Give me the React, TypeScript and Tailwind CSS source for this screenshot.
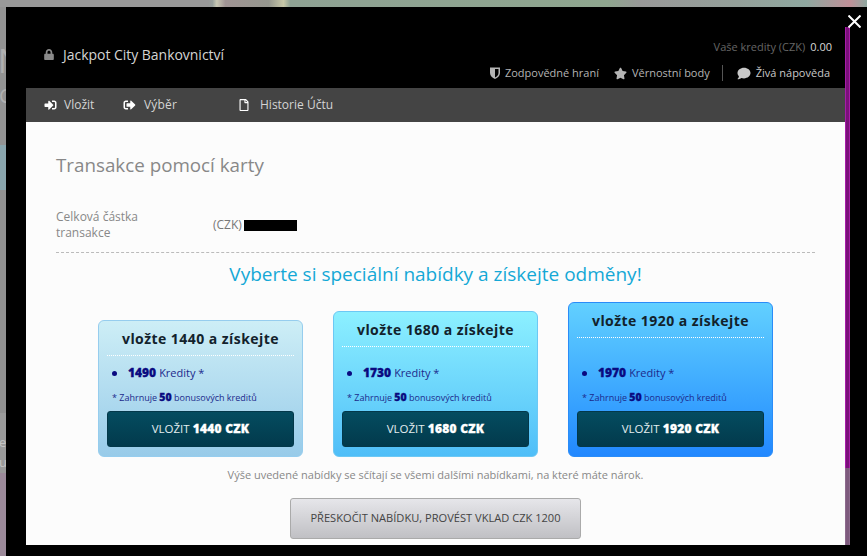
import { FaLock, FaSignInAlt, FaSignOutAlt, FaRegFile, FaStar, FaComment } from "react-icons/fa";

type Offer = { price: string; credits: string; card: string; h: string };

const offers: Offer[] = [
  { price: "1440", credits: "1490", h: "h-[137px]", card: "border-[#96cdee] bg-gradient-to-b from-[#cdeef6] to-[#98cbe9]" },
  { price: "1680", credits: "1730", h: "h-[146px]", card: "border-[#6cc8f4] bg-gradient-to-b from-[#8cf0ff] to-[#4fbef8]" },
  { price: "1920", credits: "1970", h: "h-[155px]", card: "border-[#2a8cf8] bg-gradient-to-b from-[#62d0ff] to-[#2288ff]" },
];

function OfferCard({ o }: { o: Offer }) {
  return (
    <div className={`flex w-[205px] flex-col justify-between rounded-[6px] border px-2 pb-[9px] ${o.h} ${o.card}`}>
      <div>
        <div className="flex h-[35px] items-center justify-center border-b border-dotted border-white text-[14px] font-bold tracking-[0.45px] text-[#12222c]">
          vložte {o.price} a získejte
        </div>
      </div>
      <div>
        <div className="flex h-[20px] items-center pl-[5px] text-[11px] text-[#1c2a8c]">
          <span className="h-[5px] w-[5px] rounded-full bg-[#0a0a80]" />
          <span className="ml-[11px] text-[12px] font-extrabold text-[#0a0a80] [-webkit-text-stroke:0.3px_#0a0a80]">{o.credits}</span>
          <span className="ml-[3px]">Kredity *</span>
        </div>
        <div className="mt-[6px] flex h-[18px] items-center pl-[5px] text-[9px] text-[#1c2a8c]">
          <span>* Zahrnuje <b className="text-[10.5px] font-extrabold text-[#0a0a80] [-webkit-text-stroke:0.3px_#0a0a80]">50</b> bonusových kreditů</span>
        </div>
        <button className="mt-[4px] flex h-[36px] w-full items-center justify-center rounded-[3px] border border-[#03384a] bg-gradient-to-b from-[#044c60] to-[#023a4c] text-[11.5px] text-[#e4eef0]">
          VLOŽIT&nbsp;<b className="text-[12px] font-extrabold tracking-[0.25px] text-white [-webkit-text-stroke:0.3px_#ffffff]">{o.price} CZK</b>
        </button>
      </div>
    </div>
  );
}

export default function App() {
  return (
    <div className="flex h-[556px] w-[867px] flex-col overflow-hidden bg-[#979797] font-['Open_Sans',sans-serif]">
      <div className="h-[7px] bg-[linear-gradient(90deg,#999_0,#999_24%,#97a09c_24.5%,#c8c8b4_25%,#a09494_26%,#96988f_31%,#c8c8a8_32.7%,#8fa294_33.5%,#8fa68f_70%,#999_74%,#94a09a_85%,#8fa8a0_93%,#c09098_98%,#8fa8a0_100%)]" />
      <div className="flex min-h-0 flex-1">
        <div className="flex w-[6px] flex-col overflow-hidden text-[#b0b0b0]">
          <div className="h-[138px] bg-[#939393] pt-[37px] text-[32px] leading-[34px]"><div className="w-[30px] -translate-x-[2px]">N</div><div className="w-[30px] -translate-x-[1px] text-[20px] leading-[36px]">C</div></div>
          <div className="h-[45px] bg-[#8aa6ae]" />
          <div className="h-[223px] bg-[#909090]" />
          <div className="h-[60px] bg-[#9a9a9a] pt-[19px] text-[13px] leading-[20px] text-[#c4c4c4]"><div className="w-[30px] -translate-x-[1px]">e</div><div className="w-[30px] -translate-x-[1px]">ur</div></div>
          <div className="flex-1 bg-[#9c8a9a]" />
        </div>
        <div className="relative flex min-w-0 flex-1 flex-col bg-black pl-[20px] pb-[11px]">
          <svg className="absolute right-[6px] top-[8px] h-[13px] w-[13px]" viewBox="0 0 13 13" stroke="white" strokeWidth="2">
            <path d="M0.5 0.5 12.5 12.5M12.5 0.5 0.5 12.5" />
          </svg>
          <div className="flex h-[81px] w-[819px] justify-between pl-[18px] pr-[13px]">
            <div className="flex items-center gap-[9px] pt-[14px] text-[14px] text-[#d4d4d4]">
              <FaLock className="h-[11px] w-[10px] text-[#8a8a8a]" />
              <span className="tracking-[-0.03px]">Jackpot City Bankovnictví</span>
            </div>
            <div className="flex flex-col items-end pt-[31px]">
              <div className="flex h-[18px] items-center text-[11px] text-[#666]">
                Vaše kredity (CZK)<span className="ml-[5px] text-[#d8d8d8]">0.00</span>
              </div>
              <div className="mt-[7px] flex h-[20px] items-center pr-[2px] text-[11px] text-[#b4b4b4]">
                <svg className="h-[12px] w-[10px]" viewBox="0 0 10 12" fill="#b4b4b4" fillRule="evenodd">
                  <path d="M0 .5h10v5.5c0 3-2.5 4.9-5 6-2.5-1.1-5-3-5-6zM5 2v8.5c1.8-.9 3.5-2.3 3.5-4.5V2z" />
                </svg>
                <span className="ml-[5px]">Zodpovědné hraní</span>
                <FaStar className="ml-[15px] h-[13px] w-[13px] text-[#b4b4b4]" />
                <span className="ml-[5px]">Věrnostní body</span>
                <span className="ml-[12px] h-[16px] w-px bg-[#555]" />
                <FaComment className="ml-[14px] h-[13px] w-[14px] text-[#c8c8c8]" />
                <span className="ml-[5px] text-[#c8c8c8]">Živá nápověda</span>
              </div>
            </div>
          </div>
          <div className="flex min-h-0 flex-1">
            <div className="flex w-[819px] flex-col">
              <nav className="flex h-[34px] items-center bg-[#444] pl-[18px] text-[12px] text-[#d4d4d4]">
                <FaSignInAlt className="h-[12px] w-[13px] text-white" />
                <span className="ml-[7px] w-[29px]">Vložit</span>
                <FaSignOutAlt className="ml-[30px] h-[12px] w-[13px] text-white" />
                <span className="ml-[8px] w-[33px] tracking-[0.2px]">Výběr</span>
                <FaRegFile className="ml-[62px] h-[12px] w-[10px] text-white" />
                <span className="ml-[11px]">Historie Účtu</span>
              </nav>
              <main className="flex min-h-0 flex-1 flex-col bg-[#fcfcfc] pt-[31px]">
                <h1 className="px-[30px] text-[18.8px] leading-[25px] text-[#888]">Transakce pomocí karty</h1>
                <div className="mx-[30px] mt-[31px] flex h-[44px] items-start border-b border-dashed border-[#bbb] text-[12px] leading-[16px] text-[#888]">
                  <div className="w-[157px]">Celková částka<br />transakce</div>
                  <div className="flex h-[32px] items-center text-[#777]">
                    (CZK)<span className="ml-[2px] h-[11px] w-[53px] bg-black" />
                  </div>
                </div>
                <h2 className="mt-[8px] text-center text-[19px] leading-[26px] text-[#14a8d6]">
                  Vyberte si speciální nabídky a získejte odměny!
                </h2>
                <div className="mt-[15px] flex h-[155px] items-end justify-center gap-[30px]">
                  {offers.map((o) => <OfferCard key={o.price} o={o} />)}
                </div>
                <p className="mt-[10px] text-center text-[11px] leading-[16px] text-[#888]">
                  Výše uvedené nabídky se sčítají se všemi dalšími nabídkami, na které máte nárok.
                </p>
                <div className="mt-[15px] flex justify-center">
                  <button className="flex h-[41px] w-[291px] items-center justify-center rounded-[3px] border border-[#aaa] bg-gradient-to-b from-[#e6e6ea] to-[#c0c0c4] text-[11.1px] text-[#444]">
                    PŘESKOČIT NABÍDKU, PROVÉST VKLAD CZK 1200
                  </button>
                </div>
              </main>
            </div>
            <div className="-mt-[61px] flex w-[5px] flex-col">
              <div className="h-[441px] border-x border-[#a81ca8] bg-[#7a107a]" />
              <div className="flex-1 border-x border-[#8d6a8d] bg-[#7d5a7d]" />
            </div>
          </div>
        </div>
      </div>
    </div>
  );
}
